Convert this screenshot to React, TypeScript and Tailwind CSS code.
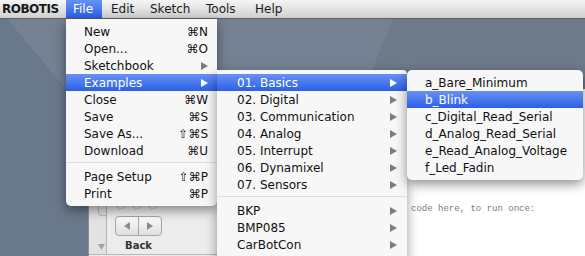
import React from "react";

type Item =
  | { sep: true }
  | { label: string; sc?: string; arrow?: boolean; active?: boolean; sep?: false };

const FILE_ITEMS: Item[] = [
  { label: "New", sc: "⌘N" },
  { label: "Open...", sc: "⌘O" },
  { label: "Sketchbook", arrow: true },
  { label: "Examples", arrow: true, active: true },
  { label: "Close", sc: "⌘W" },
  { label: "Save", sc: "⌘S" },
  { label: "Save As...", sc: "⇧⌘S" },
  { label: "Download", sc: "⌘U" },
  { sep: true },
  { label: "Page Setup", sc: "⇧⌘P" },
  { label: "Print", sc: "⌘P" },
];

const EXAMPLES: Item[] = [
  { label: "01. Basics", arrow: true, active: true },
  { label: "02. Digital", arrow: true },
  { label: "03. Communication", arrow: true },
  { label: "04. Analog", arrow: true },
  { label: "05. Interrupt", arrow: true },
  { label: "06. Dynamixel", arrow: true },
  { label: "07. Sensors", arrow: true },
  { sep: true },
  { label: "BKP", arrow: true },
  { label: "BMP085", arrow: true },
  { label: "CarBotCon", arrow: true },
  { label: "CM9_DC", arrow: true },
];

const BASICS: Item[] = [
  { label: "a_Bare_Minimum" },
  { label: "b_Blink", active: true },
  { label: "c_Digital_Read_Serial" },
  { label: "d_Analog_Read_Serial" },
  { label: "e_Read_Analog_Voltage" },
  { label: "f_Led_Fadin" },
];

const HILITE = "bg-[linear-gradient(to_bottom,#6891f5,#2c5fe6)] text-white";

function Arrow({ white }: { white?: boolean }) {
  return (
    <svg width="7" height="8" viewBox="0 0 7 8" className="shrink-0">
      <polygon points="0,0 7,4 0,8" fill={white ? "#ffffff" : "#7d7d7d"} />
    </svg>
  );
}

function MenuRows({ items, pl, pr }: { items: Item[]; pl: string; pr: string }) {
  return (
    <>
      {items.map((it, i) =>
        it.sep ? (
          <div key={i} className="mt-[3px] mb-[5px] h-px bg-[#dcdcdc]" />
        ) : (
          <div
            key={i}
            className={`flex h-[17px] items-center justify-between ${pl} ${pr} ${
              it.active ? HILITE : "text-[#111]"
            }`}
          >
            <span>{it.label}</span>
            {it.sc && <span>{it.sc}</span>}
            {it.arrow && <Arrow white={it.active} />}
          </div>
        )
      )}
    </>
  );
}

function MenuBar() {
  return (
    <div className="flex h-[19px] items-stretch border-b border-[#5f5f5f] bg-[linear-gradient(to_bottom,#f5f5f5,#d0d0d0)] text-[12px] leading-[18px] text-[#1a1a1a]">
      <span className="w-[66px] pl-[2px] font-bold tracking-[-0.5px]">ROBOTIS</span>
      <span className={`w-[36px] pl-[7px] ${HILITE}`}>File</span>
      <span className="w-[41px] pl-[9px]">Edit</span>
      <span className="w-[56px] pl-[7px]">Sketch</span>
      <span className="w-[49px] pl-[7px]">Tools</span>
      <span className="pl-[7px]">Help</span>
    </div>
  );
}

function Window() {
  return (
    <div className="absolute left-[88px] top-[70px] flex h-[200px] w-[520px] border-l border-[#8f8f8f]">
      <div className="flex w-[162px] flex-col bg-[#ececec]">
        <div className="flex h-[165px]">
          <div className="flex w-[18px] flex-col border-r border-[#b4b4b4] bg-[#e2e2e2]">
            <div className="ml-[9px] h-[127px] rounded-bl-[4px] border-b border-l border-[#b8b8b8]" />
            <svg width="7" height="6" viewBox="0 0 7 6" className="ml-[9px] mt-[28px]">
              <polygon points="0,0 7,0 3.5,6" fill="#9aa4ad" />
            </svg>
          </div>
          <div className="flex flex-1 flex-col pl-[8px]">
            <div className="mt-[109px] flex gap-[5px]">
              <div className="h-[11px] w-[11px] rounded-full border border-[#c4c4c4]" />
              <div className="h-[11px] w-[11px] rounded-full border border-[#c4c4c4]" />
              <div className="h-[11px] w-[11px] rounded-full border border-[#c4c4c4]" />
            </div>
            <div className="mt-[7px] flex h-[20px] w-[47px] rounded-[4px] border border-[#a6a6a6] bg-[linear-gradient(to_bottom,#fdfdfd,#dedede)]">
              <div className="flex flex-1 items-center justify-center border-r border-[#a6a6a6]">
                <svg width="6" height="8" viewBox="0 0 6 8">
                  <polygon points="6,0 0,4 6,8" fill="#8c8c8c" />
                </svg>
              </div>
              <div className="flex flex-1 items-center justify-center">
                <svg width="6" height="8" viewBox="0 0 6 8">
                  <polygon points="0,0 6,4 0,8" fill="#8c8c8c" />
                </svg>
              </div>
            </div>
            <span className="mt-[4px] w-[47px] text-center text-[10px] font-bold leading-[12px] text-[#333]">
              Back
            </span>
          </div>
        </div>
        <div className="h-px bg-[#b8b8b8]" />
      </div>
      <div className="flex-1 bg-white pl-[52px] pt-[101px] font-['Liberation_Mono',monospace] text-[9px] leading-[13px] text-[#7a7a7a]">
        <div className="whitespace-pre">void setup() {"{"}</div>
        <div className="whitespace-pre">{"  // put your setup code here, to run once:"}</div>
      </div>
    </div>
  );
}

export default function App() {
  return (
    <div className="relative h-[256px] w-[585px] overflow-hidden font-['DejaVu_Sans',sans-serif] text-[12px]">
      <MenuBar />
      <div className="relative h-[237px] bg-[#6a788b] bg-[linear-gradient(50deg,transparent_158px,rgba(255,255,255,0.07)_158px),linear-gradient(112deg,transparent_364px,rgba(0,0,0,0.07)_364px)]">
        <Window />
      </div>

      <div className="absolute left-[66px] top-[19px] w-[151px] rounded-b-[5px] bg-[#f7f7f7] pb-[4px] pt-[4px] shadow-[0_4px_12px_rgba(0,0,0,0.45)]">
        <MenuRows items={FILE_ITEMS} pl="pl-[18px]" pr="pr-[9px]" />
      </div>

      <div className="absolute left-[217px] top-[70px] w-[190px] rounded-tr-[4px] bg-[#f7f7f7] pt-[4px] shadow-[0_4px_12px_rgba(0,0,0,0.4)]">
        <MenuRows items={EXAMPLES} pl="pl-[20px]" pr="pr-[10px]" />
      </div>

      <div className="absolute left-[407px] top-[70px] w-[176px] rounded-[5px] bg-[#f7f7f7] pb-[4px] pt-[4px] shadow-[0_4px_12px_rgba(0,0,0,0.45)]">
        <MenuRows items={BASICS} pl="pl-[18px]" pr="pr-[10px]" />
      </div>
    </div>
  );
}
